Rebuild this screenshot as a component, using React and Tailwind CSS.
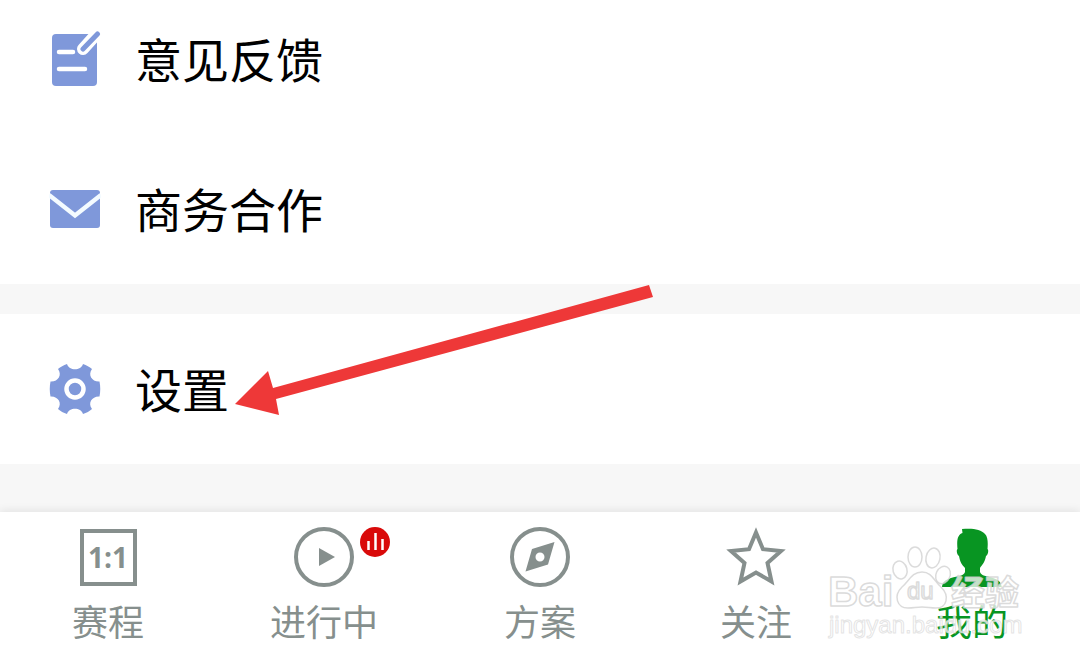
import { useState } from 'react';

function FeedbackIcon() {
  return (
    <svg viewBox="0 0 52 56" className="h-14 w-[52px]" aria-hidden="true">
      <rect x="3" y="3" width="45" height="52" rx="4" fill="#7f98da" />
      <path d="M34 18 52 -2" stroke="#fff" strokeWidth="12" strokeLinecap="round" />
      <path d="M34 18 48.500 3" stroke="#7f98da" strokeWidth="5" strokeLinecap="round" />
      <path d="M10 21h14M10 38h26" stroke="#fff" strokeWidth="4.500" strokeLinecap="round" />
    </svg>
  );
}

function MailIcon() {
  return (
    <svg viewBox="0 0 52 38" className="h-[38px] w-[52px]" aria-hidden="true">
      <rect x="1" width="50" height="38" rx="3" fill="#7f98da" />
      <path d="M0 5 26 25.500 52 5" fill="none" stroke="#f4fbff" strokeWidth="4.500" />
    </svg>
  );
}

function GearIcon() {
  return (
    <svg viewBox="0 0 52 52" className="h-[52px] w-[52px]" aria-hidden="true">
      <path
        fill="#7f98da"
        d="M18 1c2 7 14 7 16 0 3.500 1 6.500 3 9 5-4.500 6 0 13 7.500 12.500 1 5 1 10 0 15C43 33 38.500 40 43 46c-2.500 2-5.500 4-9 5-2-7-14-7-16 0-3.500-1-6.500-3-9-5 4.500-6 0-13-7.500-12.500-1-5-1-10 0-15C9 19 13.500 12 9 6c2.500-2 5.500-4 9-5z"
      />
      <circle cx="26" cy="26" r="8.500" fill="none" stroke="#fff" strokeWidth="4.500" />
    </svg>
  );
}

function ScoreIcon() {
  return (
    <span className="flex h-[57px] w-[57px] items-center justify-center border-4 border-[#868f8d] font-['Open_Sans',sans-serif] text-[28px] leading-none font-bold text-[#868f8d]">
      1:1
    </span>
  );
}

function PlayIcon() {
  return (
    <svg viewBox="0 0 60 60" className="h-[60px] w-[60px]" aria-hidden="true">
      <circle cx="30" cy="30" r="28" fill="none" stroke="#868f8d" strokeWidth="4" />
      <path d="M25 21v18l16-9z" fill="#868f8d" />
    </svg>
  );
}

function CompassIcon() {
  return (
    <svg viewBox="0 0 60 60" className="h-[60px] w-[60px]" aria-hidden="true">
      <circle cx="30" cy="30" r="28" fill="none" stroke="#868f8d" strokeWidth="4" />
      <path
        fill="#868f8d"
        fillRule="evenodd"
        d="M44.500 15 38 37.500 15.500 44.500 22 22zM30 25.500a4.500 4.500 0 1 0 0 9 4.500 4.500 0 0 0 0-9z"
      />
    </svg>
  );
}

function StarIcon() {
  return (
    <svg viewBox="0 0 60 60" className="h-[60px] w-[60px]" aria-hidden="true">
      <path
        fill="none"
        stroke="#868f8d"
        strokeWidth="4"
        d="M30 5.500 37 22.200 55 24 41.500 36 45.500 54.500 30 45.500 14.500 54.500 18.500 36 5 24 23 22.200z"
      />
    </svg>
  );
}

function UserIcon() {
  return (
    <svg viewBox="0 0 60 60" className="h-[60px] w-[60px]" aria-hidden="true">
      <path
        fill="#089522"
        d="M20 2c10-1 19 0 23 5 3 3 3 9 2.500 15 1.500 1 .5 6-1.500 7-1 6-4 9-6 12v4c1 4 7 4 13 6 6 2 8 4 9 10H0c0-6 3-8 9-10 7-2 13-2 14-6v-4c-3-3-5-6-6-12-2-1-3-6-1.500-7-.5-5-.5-10 1-12.500 1-2 2-3 4-3.500z"
      />
    </svg>
  );
}

function LiveBadge() {
  return (
    <svg viewBox="0 0 30 30" className="absolute top-0 left-[66px] h-[30px] w-[30px]" aria-hidden="true">
      <circle cx="15" cy="15" r="15" fill="#d90a0a" />
      <path d="M8.500 14v9M15.500 6v17M22.500 12v11" stroke="#fff" strokeWidth="2.500" />
    </svg>
  );
}

function Arrow() {
  return (
    <svg viewBox="0 0 418 130" className="pointer-events-none absolute top-[285px] left-[235px] h-[130px] w-[418px]" aria-hidden="true">
      <path fill="#ee3838" d="M0 119 33 86l5 17L414 0l4 12L41 114l3 16z" />
    </svg>
  );
}

function Watermark() {
  return (
    <svg
      viewBox="0 0 200 96"
      className="pointer-events-none absolute right-[54px] bottom-5 h-24 w-[200px]"
      fill="#fff"
      fillOpacity="0.75"
      stroke="#d2d2d2"
      strokeOpacity="0.8"
      strokeWidth="1.5"
      strokeLinejoin="round"
    >
      <g fontFamily="'Liberation Sans', 'Noto Sans CJK SC', sans-serif" fontWeight="700">
        <text x="2" y="60" fontSize="42">Bai</text>
        <text x="125" y="59" fontSize="34">经验</text>
        <text x="3" y="87" fontSize="24" fontWeight="400" strokeWidth="1" strokeOpacity="0.6">jingyan.baidu.com</text>
      </g>
      <ellipse cx="74" cy="24" rx="7" ry="9" transform="rotate(-15 74 24)" />
      <ellipse cx="89" cy="11" rx="7" ry="10" />
      <ellipse cx="107" cy="12" rx="7" ry="10" transform="rotate(12 107 12)" />
      <ellipse cx="117" cy="29" rx="7" ry="9" transform="rotate(25 117 29)" />
      <path d="M96 26c10 0 12 9 19 15 9 9 6 21-5 21-6 0-8-1-14-1s-8 1-14 1c-11 0-15-12-6-21 7-6 10-15 20-15z" />
      <text x="81" y="53" fontSize="24" fontWeight="400" fontFamily="'Liberation Sans', sans-serif">du</text>
    </svg>
  );
}

const menuGroups = [
  [
    { label: '意见反馈', icon: FeedbackIcon },
    { label: '商务合作', icon: MailIcon },
  ],
  [{ label: '设置', icon: GearIcon }],
];

const tabs = [
  { label: '赛程', icon: ScoreIcon },
  { label: '进行中', icon: PlayIcon, live: true },
  { label: '方案', icon: CompassIcon },
  { label: '关注', icon: StarIcon },
  { label: '我的', icon: UserIcon },
];

export default function App() {
  const [activeTab, setActiveTab] = useState('我的');

  return (
    <div className="relative flex min-h-screen flex-col bg-[#f7f7f7] font-['Noto_Sans_CJK_SC',sans-serif]">
      <main className="flex flex-1 flex-col gap-[30px] pb-12">
        {menuGroups.map((group, index) => (
          <section key={index} className="bg-white">
            {group.map(({ label, icon: Icon }) => (
              <button
                key={label}
                type="button"
                className={`flex w-full items-center gap-[34px] px-[49px] pb-10 text-left text-[47px] text-black ${label === '意见反馈' ? 'pt-6' : 'pt-10'}`}
              >
                <Icon />
                <span className="pb-0.5 leading-[68px]">{label}</span>
              </button>
            ))}
          </section>
        ))}
      </main>

      <nav className="grid grid-cols-5 bg-white pt-[15px] pb-3.5 shadow-[0_-2px_8px_rgba(0,0,0,0.08)]">
        {tabs.map(({ label, icon: Icon, live }) => (
          <button
            key={label}
            type="button"
            onClick={() => setActiveTab(label)}
            className={`flex flex-col items-center gap-1.5 text-4xl ${activeTab === label ? 'text-[#089522]' : 'text-[#868f8d]'}`}
          >
            <span className="relative flex h-[60px] w-[60px] items-center justify-center">
              <Icon />
              {live && <LiveBadge />}
            </span>
            <span className="leading-[55px]">{label}</span>
          </button>
        ))}
      </nav>

      <Arrow />
      <Watermark />
    </div>
  );
}
